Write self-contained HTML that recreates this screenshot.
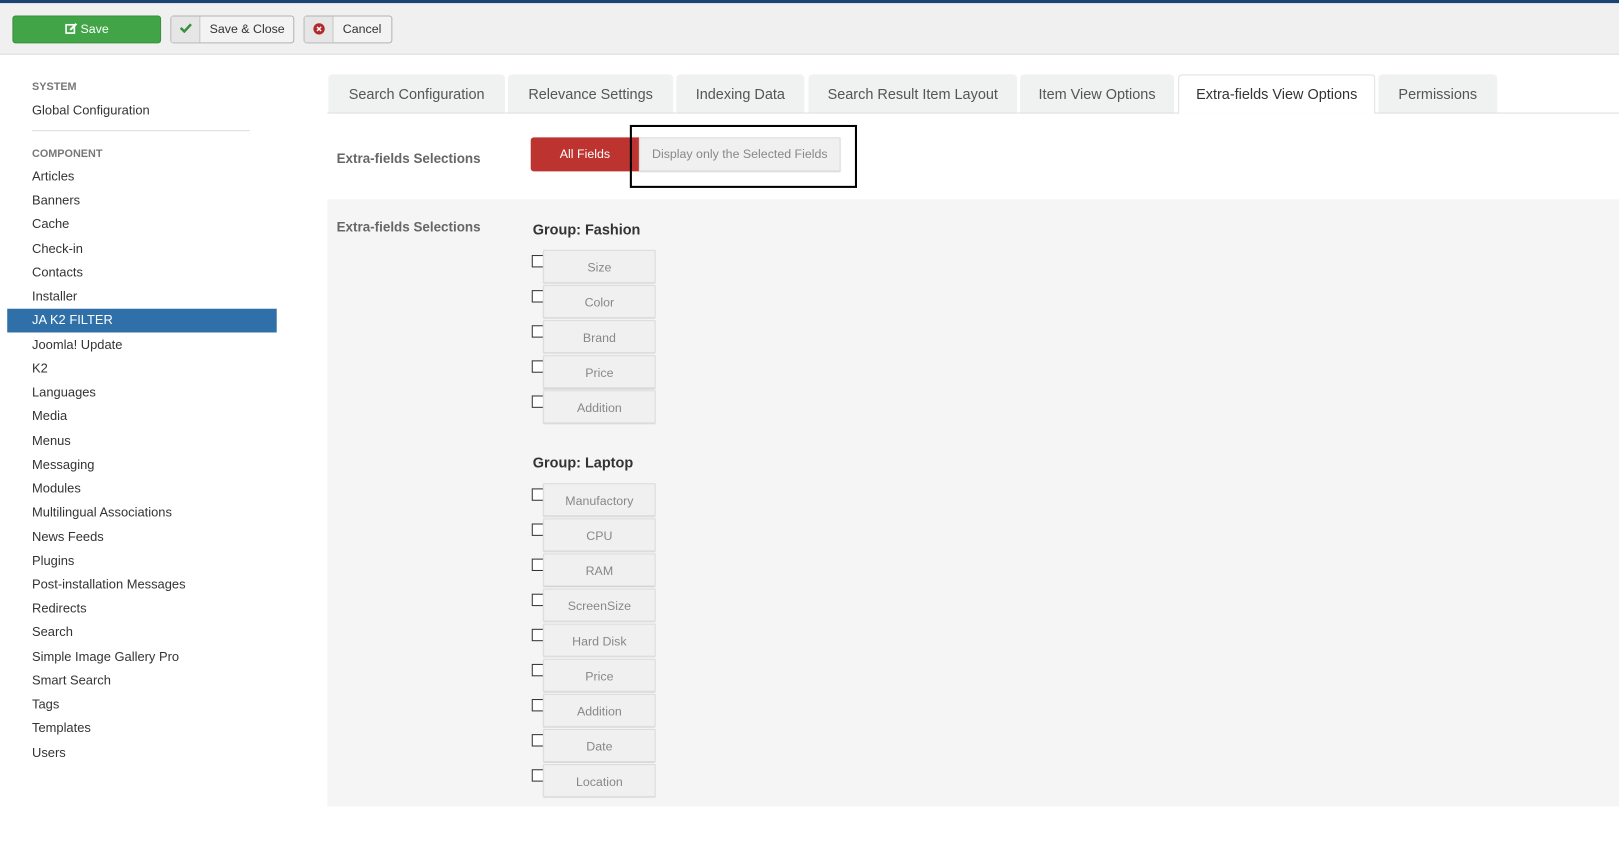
<!DOCTYPE html>
<html><head><meta charset="utf-8"><style>
html,body{margin:0;padding:0;background:#fff;overflow:hidden;width:1619px;height:846px}
#w{position:absolute;left:0;top:0;width:1568px;height:819px;transform:scale(1.03253);transform-origin:0 0;font-family:"Liberation Sans",sans-serif;color:#333}
.a{position:absolute}
.tb{left:0;top:0;width:1568px;height:53px;background:#f0f0f0;border-bottom:1px solid #ddd;border-top:3px solid #1a4272;box-sizing:border-box}
.btn{position:absolute;top:15px;height:27px;border:1px solid #b3b3b3;border-radius:3px;background:#f3f3f3;box-sizing:border-box;font-size:12px;line-height:25px}
.ic{display:inline-block;width:27px;height:25px;border-right:1px solid #c8c8c8;background:#e6e6e6;vertical-align:top;text-align:center}
.side{font-size:12.5px;color:#333}
.side div{position:absolute;left:31px}
.h{font-size:10.5px;color:#777;font-weight:bold}
.tab{position:absolute;top:72px;height:37px;background:#f0f1f1;border-radius:4px 4px 0 0;font-size:14px;color:#555;text-align:center;line-height:38px}
.lbl{font-size:13px;font-weight:bold;color:#666;left:326px}
.cb{position:absolute;left:515px;width:10px;height:10px;border:1px solid #333;background:#fff}
.it{position:absolute;left:526px;width:109px;height:32px;background:#f0f0f0;border:1px solid #dcdcdc;box-shadow:0 1px 1px #ccc;box-sizing:border-box;text-align:center;line-height:32px;font-size:12px;color:#888}
.g{left:516px;font-size:14px;font-weight:bold;color:#333}
</style></head><body><div id="w">
<div class="a tb"></div>
<div class="btn" style="left:12px;width:144px;background:#41a447;border-color:#3a8f3e;color:#fff;text-align:center">
<svg width="12" height="11" viewBox="0 0 12 11" style="vertical-align:-1px"><rect x="1" y="2" width="8" height="8" fill="none" stroke="#fff" stroke-width="1.6"/><path d="M5 7 L11 1" stroke="#fff" stroke-width="2"/></svg> Save</div>
<div class="btn" style="left:165px;width:120px"><span class="ic"><svg width="12" height="10" viewBox="0 0 12 10"><path d="M1 5 L4.5 8.5 L11 1.5" stroke="#3a8f3e" stroke-width="2.4" fill="none"/></svg></span><span style="padding-left:9px">Save &amp; Close</span></div>
<div class="btn" style="left:294px;width:86px"><span class="ic"><svg width="12" height="12" viewBox="0 0 12 12" style="vertical-align:-2px"><circle cx="6" cy="6" r="5.5" fill="#b22a2a"/><path d="M4 4 L8 8 M8 4 L4 8" stroke="#fff" stroke-width="1.4"/></svg></span><span style="padding-left:9px">Cancel</span></div>

<div class="side">
<div class="h" style="top:78px">SYSTEM</div>
<div style="top:100px">Global Configuration</div>
<div style="top:126px;width:211px;height:1px;background:#ddd"></div>
<div class="h" style="top:143px">COMPONENT</div>
<div style="top:164px">Articles</div>
<div style="top:187px">Banners</div>
<div style="top:210px">Cache</div>
<div style="top:234px">Check-in</div>
<div style="top:257px">Contacts</div>
<div style="top:280px">Installer</div>
<div style="top:299px;left:7px;width:261px;height:23px;background:#2f70a9;color:#fff;line-height:23px;padding-left:24px;box-sizing:border-box">JA K2 FILTER</div>
<div style="top:327px">Joomla! Update</div>
<div style="top:350px">K2</div>
<div style="top:373px">Languages</div>
<div style="top:396px">Media</div>
<div style="top:420px">Menus</div>
<div style="top:443px">Messaging</div>
<div style="top:466px">Modules</div>
<div style="top:489px">Multilingual Associations</div>
<div style="top:513px">News Feeds</div>
<div style="top:536px">Plugins</div>
<div style="top:559px">Post-installation Messages</div>
<div style="top:582px">Redirects</div>
<div style="top:605px">Search</div>
<div style="top:629px">Simple Image Gallery Pro</div>
<div style="top:652px">Smart Search</div>
<div style="top:675px">Tags</div>
<div style="top:698px">Templates</div>
<div style="top:722px">Users</div>
</div>

<div class="a" style="left:317px;top:109px;width:1251px;height:1px;background:#ddd"></div>
<div class="tab" style="left:318px;width:171px">Search Configuration</div>
<div class="tab" style="left:492px;width:160px">Relevance Settings</div>
<div class="tab" style="left:655px;width:124px">Indexing Data</div>
<div class="tab" style="left:783px;width:202px">Search Result Item Layout</div>
<div class="tab" style="left:988px;width:149px">Item View Options</div>
<div class="tab" style="left:1141px;width:191px;height:38px;background:#fff;border:1px solid #ddd;border-bottom:none;box-sizing:border-box;color:#333;line-height:37px">Extra-fields View Options</div>
<div class="tab" style="left:1335px;width:115px">Permissions</div>

<div class="a lbl" style="top:146px">Extra-fields Selections</div>
<div class="a" style="left:514px;top:133px;width:105px;height:33px;background:#bd3330;color:#fff;font-size:12px;text-align:center;line-height:33px;border-radius:3px 0 0 3px">All Fields</div>
<div class="a" style="left:619px;top:133px;width:195px;height:33px;background:#f0f0f0;border:1px solid #ddd;box-sizing:border-box;color:#888;font-size:12px;text-align:center;line-height:31px;box-shadow:0 1px 1px #ccc">Display only the Selected Fields</div>
<div class="a" style="left:610px;top:121px;width:216px;height:57px;border:2px solid #000"></div>

<div class="a" style="left:317px;top:193px;width:1251px;height:588px;background:#f5f5f5"></div>
<div class="a lbl" style="top:212px">Extra-fields Selections</div>
<div class="a g" style="top:214px">Group: Fashion</div>
<div class="cb" style="top:247px"></div><div class="it" style="top:242px">Size</div>
<div class="cb" style="top:281px"></div><div class="it" style="top:276px">Color</div>
<div class="cb" style="top:315px"></div><div class="it" style="top:310px">Brand</div>
<div class="cb" style="top:349px"></div><div class="it" style="top:344px">Price</div>
<div class="cb" style="top:383px"></div><div class="it" style="top:378px">Addition</div>
<div class="a g" style="top:440px">Group: Laptop</div>
<div class="cb" style="top:473px"></div><div class="it" style="top:468px">Manufactory</div>
<div class="cb" style="top:507px"></div><div class="it" style="top:502px">CPU</div>
<div class="cb" style="top:541px"></div><div class="it" style="top:536px">RAM</div>
<div class="cb" style="top:575px"></div><div class="it" style="top:570px">ScreenSize</div>
<div class="cb" style="top:609px"></div><div class="it" style="top:604px">Hard Disk</div>
<div class="cb" style="top:643px"></div><div class="it" style="top:638px">Price</div>
<div class="cb" style="top:677px"></div><div class="it" style="top:672px">Addition</div>
<div class="cb" style="top:711px"></div><div class="it" style="top:706px">Date</div>
<div class="cb" style="top:745px"></div><div class="it" style="top:740px">Location</div>
</div></body></html>
